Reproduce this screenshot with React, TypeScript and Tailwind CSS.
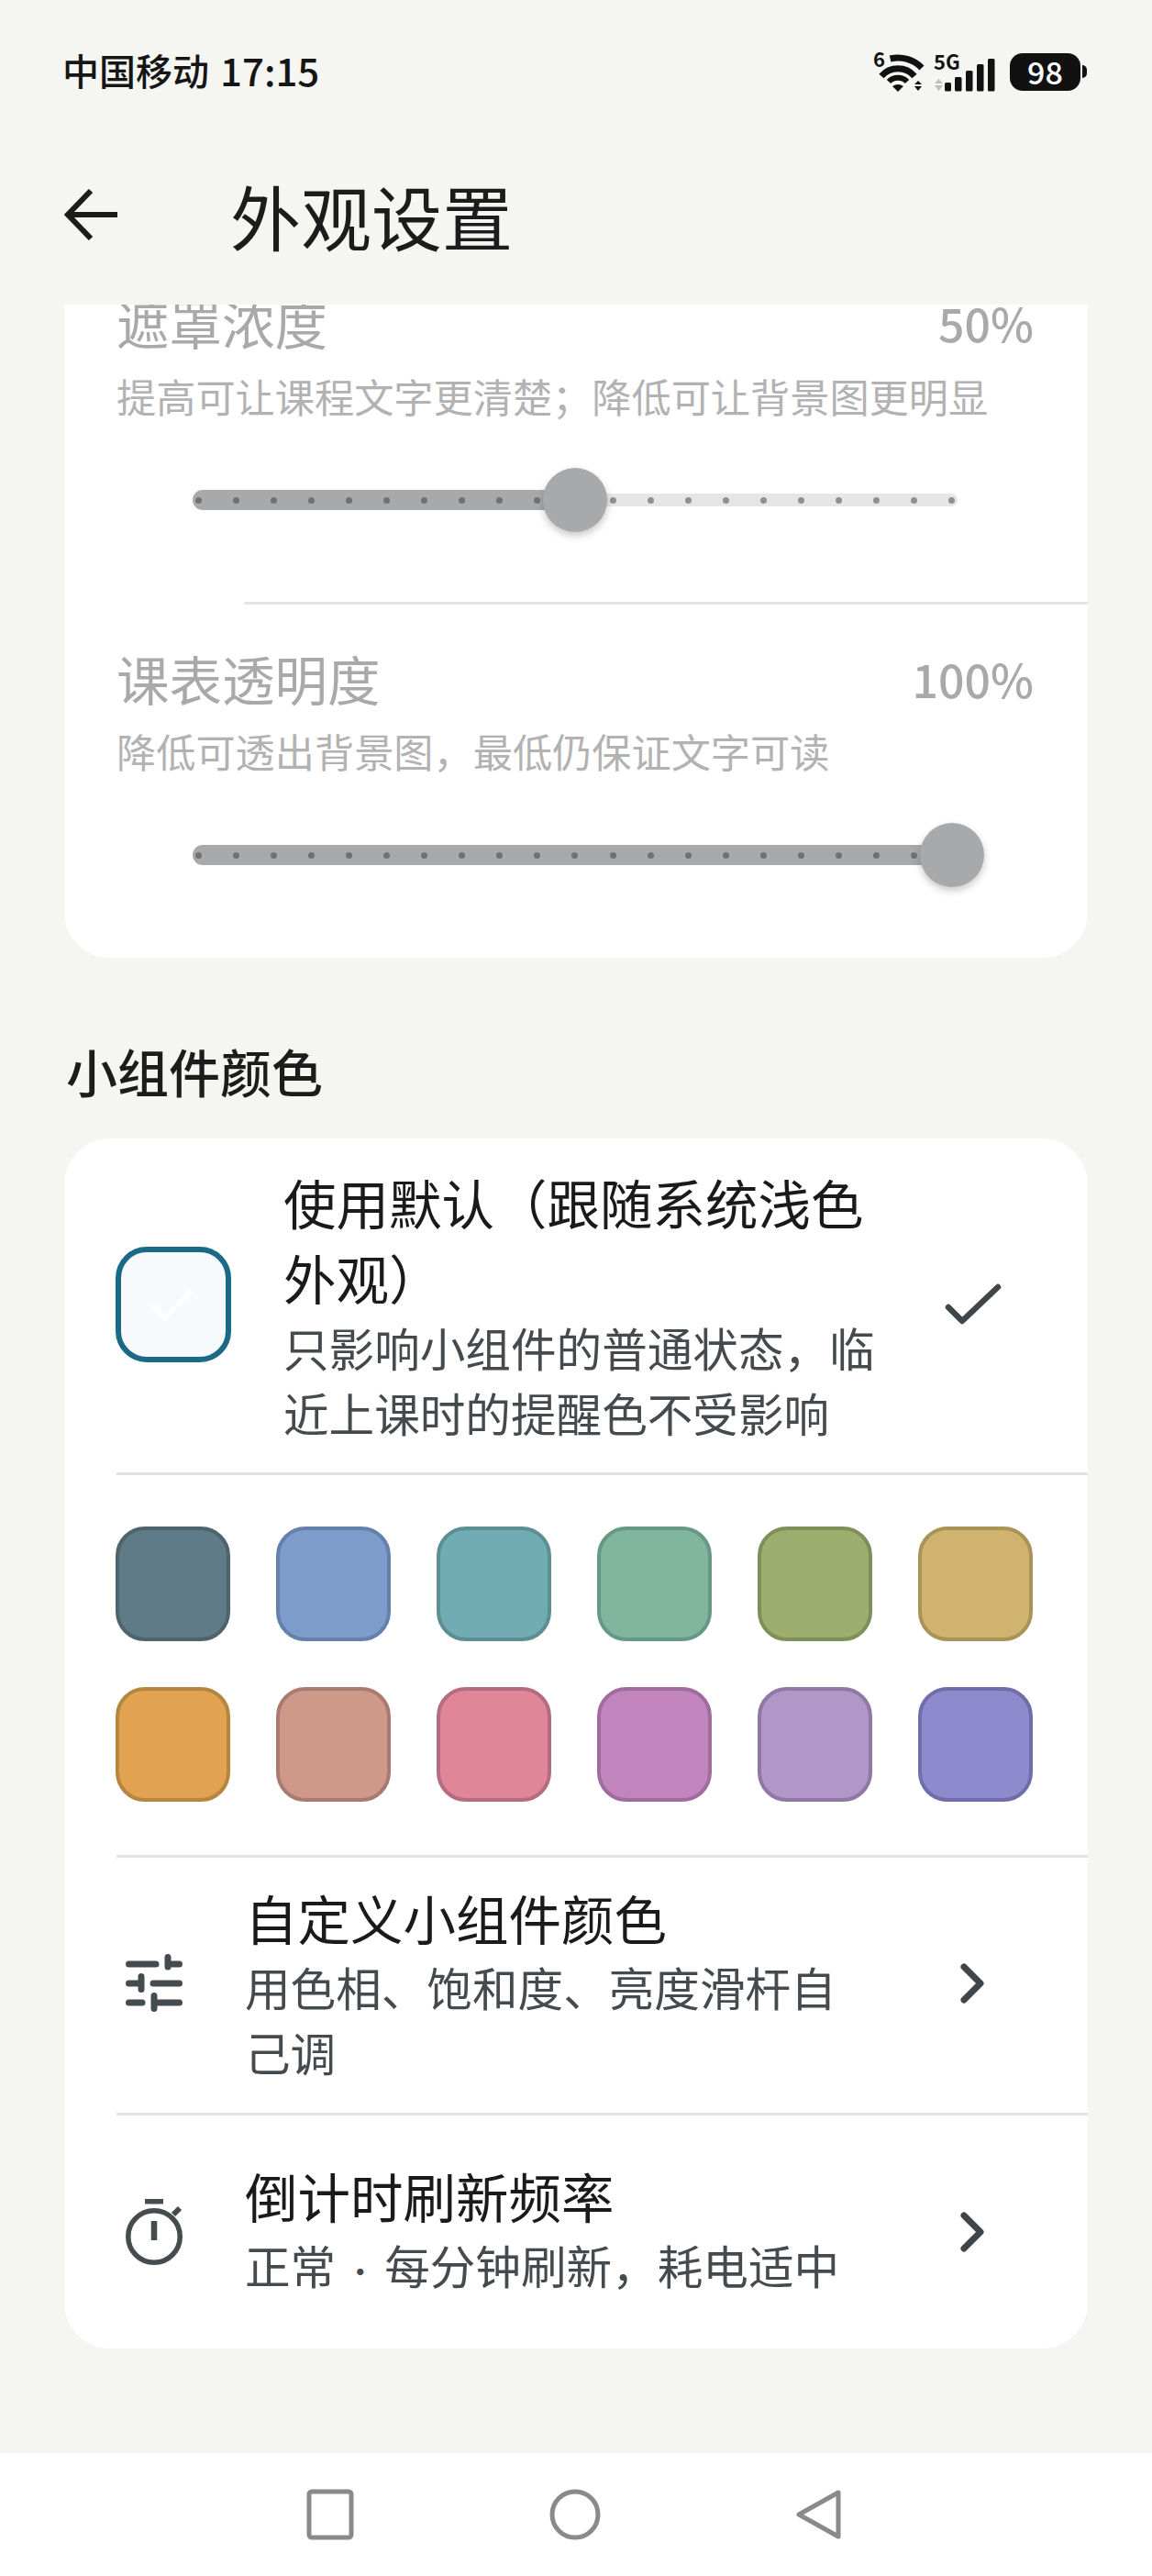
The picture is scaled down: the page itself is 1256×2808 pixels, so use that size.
import React from 'react';

const font = { fontFamily: '"Noto Sans CJK SC", "Noto Sans", sans-serif' };

const Tick = ({ on }: { on: boolean }) => (
  <span className={`h-[7px] w-[7px] rounded-full ${on ? 'bg-[#707172]' : 'bg-[#909090]'}`} />
);

// 21 dots along the track, thumb sits on top of them
const Slider = ({ value }: { value: number }) => {
  const dots = Array.from({ length: 21 }, (_, i) => i);
  const thumbX = 6 + (value / 100) * 822;
  return (
    <div className="relative ml-[140px] mt-[49px] h-[70px] w-[834px]">
      <div className="absolute left-0 right-0 top-[28px] h-[14px] rounded-full bg-[#e6e6e6]" />
      <div
        className="absolute left-0 top-[24px] h-[22px] rounded-full bg-[#a8a9aa]"
        style={{ width: thumbX }}
      />
      <div className="absolute left-[3px] right-[3px] top-[32px] flex justify-between">
        {dots.map((i) => (
          <Tick key={i} on={i * 5 <= value} />
        ))}
      </div>
      <div
        className="absolute top-0 h-[70px] w-[70px] -translate-x-1/2 rounded-full bg-[#a8a9aa] shadow-[0_4px_8px_rgba(0,0,0,0.22)]"
        style={{ left: thumbX }}
      />
    </div>
  );
};

const colors = [
  ['#607b88', '#4f636d'],
  ['#7d9bcb', '#6480ab'],
  ['#71acb4', '#5b8f92'],
  ['#80b59e', '#669885'],
  ['#9dae6e', '#7f8f5a'],
  ['#cfb36f', '#a99357'],
  ['#e1a352', '#b5863f'],
  ['#cf9989', '#a87a72'],
  ['#e08699', '#b36c80'],
  ['#c284bd', '#a06b9d'],
  ['#b196c8', '#8f78a3'],
  ['#8d8acd', '#6f6eaa'],
];

const Chevron = () => (
  <svg width="28" height="44" viewBox="0 0 28 44" fill="none" stroke="#3f4649" strokeWidth="7" strokeLinecap="round" strokeLinejoin="round">
    <path d="M4 4 L22 22 L4 40" />
  </svg>
);

const Nav = () => (
  <div className="flex h-[134px] shrink-0 items-center bg-white pl-[334px]">
    <svg width="52" height="56" viewBox="0 0 52 56" fill="none" stroke="#8a8a8a" strokeWidth="5">
      <rect x="3" y="3" width="46" height="50" rx="3" />
    </svg>
    <svg className="ml-[213px]" width="56" height="56" viewBox="0 0 56 56" fill="none" stroke="#8a8a8a" strokeWidth="5">
      <circle cx="28" cy="28" r="25" />
    </svg>
    <svg className="ml-[212px]" width="52" height="56" viewBox="0 0 52 56" fill="none" stroke="#8a8a8a" strokeWidth="5" strokeLinejoin="round">
      <path d="M47 4 V52 L4 28 Z" />
    </svg>
  </div>
);

const Wifi = () => (
  <div className="relative h-[44px] w-[56px]">
    <span className="absolute left-0 top-[-6px] text-[22px] font-bold leading-[26px] text-[#111]">6</span>
    <svg width="56" height="44" viewBox="0 0 56 44" fill="none" stroke="#111">
      <path d="M18.6 8 A36 36 0 0 1 53 18" strokeWidth="7" />
      <path d="M9 27 A24 24 0 0 1 45 27" strokeWidth="7" />
      <path d="M17 33 A14 14 0 0 1 37 33" strokeWidth="6" />
      <path d="M21 38 Q27 34 33 38 L27 44 Z" fill="#111" stroke="none" />
      <path d="M49 32 L53 36 H45 Z M49 43 L45 38 H53 Z" fill="#111" stroke="none" />
    </svg>
  </div>
);

const Cell = () => (
  <div className="relative h-[44px] w-[68px]">
    <span className="absolute left-0 top-[-3px] text-[22px] font-bold leading-[26px] text-[#111]">5G</span>
    <svg width="68" height="44" viewBox="0 0 68 44" fill="#111">
      <path d="M5.5 30 L10 35 H1 Z M5.5 43 L1 37 H10 Z" fill="#bdbdbd" />
      <rect x="12" y="34" width="7" height="9.5" rx="1.5" />
      <rect x="23" y="28" width="7.5" height="15.5" rx="1.5" />
      <rect x="35" y="21" width="7.5" height="22.5" rx="1.5" />
      <rect x="47" y="14" width="7.5" height="29.5" rx="1.5" />
      <rect x="59" y="8" width="7.5" height="35.5" rx="1.5" />
    </svg>
  </div>
);

export default function App() {
  return (
    <div className="flex h-[2808px] w-[1256px] flex-col overflow-hidden bg-[#f5f5f2]" style={font}>
      {/* status bar */}
      <div className="flex h-[156px] shrink-0 items-center justify-between pl-[68px] pr-[71px]">
        <div className="flex items-center pb-[4px] font-medium leading-none text-[#151515]">
          <span className="text-[40px]">中国移动</span>
          <span className="ml-[12px] text-[42px]">17:15</span>
        </div>
        <div className="flex items-center">
          <Wifi />
          <div className="ml-[10px]"><Cell /></div>
          <div className="ml-[15px] flex items-center">
            <span className="flex h-[41px] w-[77px] items-center justify-center rounded-[14px] bg-[#111] text-[34px] font-medium leading-none text-white">98</span>
            <span className="ml-[2px] h-[14px] w-[5px] rounded-r-full bg-[#111]" />
          </div>
        </div>
      </div>

      {/* header */}
      <div className="flex h-[176px] shrink-0 items-center pb-[20px] pl-[70px]">
        <svg width="58" height="56" viewBox="0 0 58 56" fill="none" stroke="#1c1c1c" strokeWidth="6">
          <path d="M29 2 L4 28 L29 54 M4 28 H58" />
        </svg>
        <h1 className="ml-[123px] text-[77px] font-normal leading-none text-[#1c1c1c]">外观设置</h1>
      </div>

      {/* scrolled content, first row is cut off by the header */}
      <div className="min-h-0 flex-1 overflow-hidden">
        <div className="mx-[70px] w-[1116px] rounded-b-[50px] bg-white pb-[77px]">
          <div className="flex items-center justify-between pl-[57px] pr-[59px]">
            <span className="-mt-[21px] text-[57.5px] leading-[80px] text-[#a9a9a9]">遮罩浓度</span>
            <span className="-mt-[21px] text-[50px] font-medium leading-[80px] text-[#a9a9a9]">50%</span>
          </div>
          <p className="mt-[10px] pl-[57px] text-[43.2px] leading-[60px] text-[#b2b2b2]">提高可让课程文字更清楚；降低可让背景图更明显</p>
          <Slider value={50} />
          <div className="ml-[196px] mt-[76px] h-[3px] bg-[#e4e5e7]" />
          <div className="mt-[40px] flex items-center justify-between pl-[57px] pr-[59px]">
            <span className="text-[57.5px] leading-[80px] text-[#a9a9a9]">课表透明度</span>
            <span className="text-[50px] font-medium leading-[80px] text-[#a9a9a9]">100%</span>
          </div>
          <p className="mt-[9px] pl-[57px] text-[43.2px] leading-[60px] text-[#b2b2b2]">降低可透出背景图，最低仍保证文字可读</p>
          <Slider value={100} />
        </div>

        <h2 className="ml-[72px] mt-[88px] text-[56px] font-medium leading-[70px] text-[#1c1c1c]">小组件颜色</h2>

        <div className="mx-[70px] mt-[39px] w-[1116px] rounded-[50px] bg-white">
          <div className="flex items-center pl-[56px] pt-[28px]">
            <div className="relative h-[126px] w-[126px] shrink-0 rounded-[34px] border-[6px] border-[#1a6a87] bg-[#f7fafc]">
              <svg className="absolute left-[30px] top-[38px]" width="50" height="40" viewBox="0 0 50 40" fill="none" stroke="#ffffff" strokeWidth="5">
                <path d="M4 20 L18 34 L46 4" />
              </svg>
            </div>
            <div className="ml-[57px] w-[660px]">
              <p className="text-[57.5px] leading-[82px] text-[#1a1a1a]">使用默认（跟随系统浅色外观）</p>
              <p className="text-[49.6px] leading-[71px] text-[#444a4d]">只影响小组件的普通状态，临近上课时的提醒色不受影响</p>
            </div>
            <svg className="ml-[61px]" width="62" height="46" viewBox="0 0 62 46" fill="none" stroke="#3f4649" strokeWidth="6.5" strokeLinecap="round" strokeLinejoin="round">
              <path d="M4 26 L19 41 L58 4" />
            </svg>
          </div>
          <div className="ml-[57px] mt-[30px] h-[3px] bg-[#e2e4e4]" />

          <div className="grid grid-cols-6 gap-[50px] pl-[56px] pr-[60px] pt-[56px]">
            {colors.map(([bg, border]) => (
              <div
                key={bg}
                className="h-[125px] w-[125px] rounded-[32px] border-[4px]"
                style={{ backgroundColor: bg, borderColor: border }}
              />
            ))}
          </div>
          <div className="ml-[57px] mt-[58px] h-[3px] bg-[#e2e4e4]" />

          <div className="flex items-center pb-[31px] pl-[67px] pt-[26px]">
            <svg width="62" height="63" viewBox="0 0 62 63" fill="none" stroke="#454c4f" strokeWidth="7" strokeLinecap="round">
              <path d="M3.5 11 H33 M46 3.5 V14 M46 11 H58.5 M3.5 32 H17 M17 24.5 V38.5 M30 32 H58.5 M3.5 53 H18 M31 45.5 V59.5 M31 53 H58.5" />
            </svg>
            <div className="ml-[68px] w-[660px]">
              <p className="text-[57.5px] leading-[79px] text-[#1a1a1a]">自定义小组件颜色</p>
              <p className="text-[49.6px] leading-[71px] text-[#444a4d]">用色相、饱和度、亮度滑杆自己调</p>
            </div>
            <div className="ml-[120px]"><Chevron /></div>
          </div>
          <div className="ml-[57px] h-[3px] bg-[#e2e4e4]" />

          <div className="flex items-center pb-[49px] pl-[67px] pt-[48px]">
            <svg width="62" height="72" viewBox="0 0 62 72" fill="none" stroke="#454c4f" strokeWidth="5.5">
              <path d="M21 2.75 H41" />
              <path d="M31 24 V45" strokeWidth="6.5" />
              <path d="M52 17 L59 10" strokeWidth="6" />
              <circle cx="31" cy="41" r="28.25" />
            </svg>
            <div className="ml-[68px] w-[660px]">
              <p className="text-[57.5px] leading-[79px] text-[#1a1a1a]">倒计时刷新频率</p>
              <p className="whitespace-nowrap text-[49.6px] leading-[71px] text-[#444a4d]">
                正常<span className="inline-block w-[53px] text-center text-[34px]">·</span>每分钟刷新，耗电适中
              </p>
            </div>
            <div className="ml-[120px]"><Chevron /></div>
          </div>
        </div>
      </div>

      <Nav />
    </div>
  );
}
